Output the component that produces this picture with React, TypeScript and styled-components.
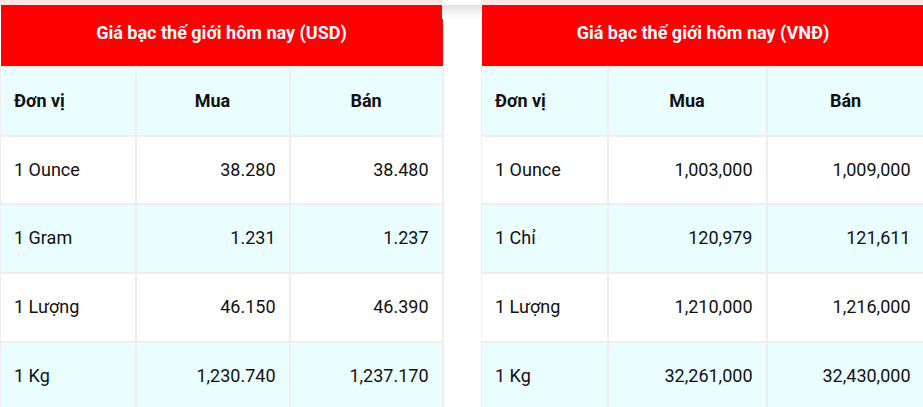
import React from 'react';
import styled, { createGlobalStyle } from 'styled-components';

const GlobalStyle = createGlobalStyle`
  html, body {
    margin: 0;
    padding: 0;
    background: #fff;
    overflow: hidden;
  }
  body {
    font-family: Roboto, "Noto Sans", Arial, sans-serif;
    color: #111;
  }
`;

const Page = styled.div`
  display: grid;
  grid-template-columns: 442px 39px 443px;
  width: 924px;
`;

const Gutter = styled.div`
  margin-top: 5px;
  height: 14px;
  background: linear-gradient(to bottom, #e2e2e2, #ffffff);
`;

const Block = styled.div`
  border-top: 5px solid #ffe6e6;
`;

const Table = styled.table`
  width: 100%;
  border-collapse: collapse;
  table-layout: fixed;
  font-size: 18px;
`;

const Title = styled.th`
  background: #ff0000;
  color: #fff;
  font-size: 18px;
  font-weight: 700;
  height: 55px;
  padding: 0 0 6px;
  text-align: center;
  vertical-align: middle;
`;

const Cell = styled.td<{ $align?: 'left' | 'right' | 'center'; $head?: boolean; $alt?: boolean }>`
  height: 64.7px;
  padding: 0 13px 2px;
  border: 2px solid #eeeeee;
  background: ${p => (p.$alt ? '#ebfeff' : '#ffffff')};
  text-align: ${p => p.$align ?? 'left'};
  font-weight: ${p => (p.$head ? 700 : 400)};
  vertical-align: middle;
  white-space: nowrap;
  &:first-child {
    border-left-width: 1px;
  }
`;

interface PriceRow {
  unit: string;
  buy: string;
  sell: string;
}

interface PriceTableProps {
  title: string;
  widths: number[];
  rows: PriceRow[];
}

const PriceTable: React.FC<PriceTableProps> = ({ title, widths, rows }) => (
  <Block>
    <Table>
      <colgroup>
        {widths.map((w, i) => (
          <col key={i} style={{ width: w }} />
        ))}
      </colgroup>
      <thead>
        <tr>
          <Title colSpan={3}>{title}</Title>
        </tr>
      </thead>
      <tbody>
        <tr>
          <Cell $head $alt>Đơn vị</Cell>
          <Cell $head $alt $align="center">Mua</Cell>
          <Cell $head $alt $align="center">Bán</Cell>
        </tr>
        {rows.map((r, i) => (
          <tr key={r.unit}>
            <Cell $alt={i % 2 === 1}>{r.unit}</Cell>
            <Cell $alt={i % 2 === 1} $align="right">{r.buy}</Cell>
            <Cell $alt={i % 2 === 1} $align="right">{r.sell}</Cell>
          </tr>
        ))}
      </tbody>
    </Table>
  </Block>
);

const usdRows: PriceRow[] = [
  { unit: '1 Ounce', buy: '38.280', sell: '38.480' },
  { unit: '1 Gram', buy: '1.231', sell: '1.237' },
  { unit: '1 Lượng', buy: '46.150', sell: '46.390' },
  { unit: '1 Kg', buy: '1,230.740', sell: '1,237.170' },
];

const vndRows: PriceRow[] = [
  { unit: '1 Ounce', buy: '1,003,000', sell: '1,009,000' },
  { unit: '1 Chỉ', buy: '120,979', sell: '121,611' },
  { unit: '1 Lượng', buy: '1,210,000', sell: '1,216,000' },
  { unit: '1 Kg', buy: '32,261,000', sell: '32,430,000' },
];

const App: React.FC = () => (
  <>
    <GlobalStyle />
    <Page>
      <PriceTable title="Giá bạc thế giới hôm nay (USD)" widths={[135, 154, 153]} rows={usdRows} />
      <Gutter />
      <PriceTable title="Giá bạc thế giới hôm nay (VNĐ)" widths={[126, 159, 158]} rows={vndRows} />
    </Page>
  </>
);

export default App;
